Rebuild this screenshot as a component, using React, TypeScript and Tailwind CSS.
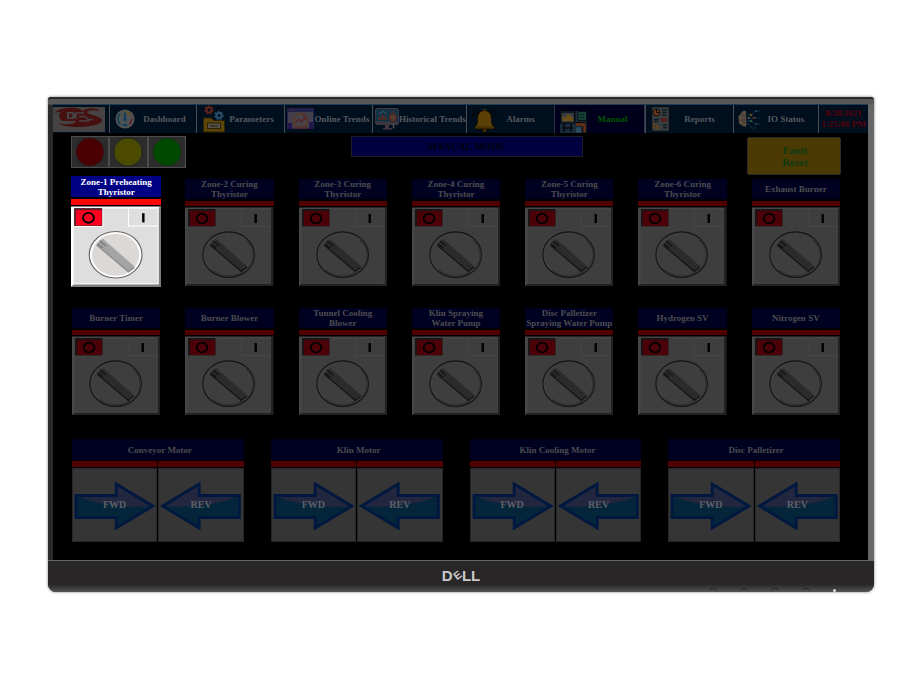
import React from "react";

function Logo() {
  return (
    <svg viewBox="0 0 52 25" className="w-full h-[25px]" preserveAspectRatio="none" aria-label="DBS logo" role="img">
      <rect width="52" height="25" fill="#454343" />
      <path d="M1 6C6 1 16 0 22 1c4 0 6 2 8 3 4-3 12-4 17 0-5-1-12-1-13 1 0 3 15 4 15 8 0 5-14 7-24 7-8 0-16-1-20-4 8 2 16 2 18-2H10c-4 0-5-9-2-9-3 0-5 0-7 1z" fill="#471010" />
      <path d="M14 5h5c5 0 5 7 0 7h-5z" fill="#454343" />
      <path d="M16 6.500h2c2 0 2 4 0 4h-2z" fill="#471010" />
      <path d="M23 12V6h8M26 9.500h6l3 3h5M26 14h10" fill="none" stroke="#454343" strokeWidth="1.400" />
    </svg>
  );
}

function GaugeIcon() {
  return (
    <svg viewBox="0 0 20 20" className="w-5 h-5 shrink-0">
      <circle cx="10" cy="10" r="9.6" fill="#4f5152" />
      <circle cx="10" cy="10" r="7" fill="none" stroke="#114052" strokeWidth="1.6" strokeDasharray="12 34" transform="rotate(130 10 10)" />
      <path d="M10 3a7 7 0 0 1 6 4" fill="none" stroke="#66501a" strokeWidth="1.6" />
      <path d="M17 10a7 7 0 0 1-3 5" fill="none" stroke="#5e1824" strokeWidth="1.6" />
      <path d="M9.3 3h1.4l.6 7H8.7z" fill="#10405b" />
      <circle cx="10" cy="10.5" r="1.8" fill="#10405b" />
      <rect x="7.5" y="15" width="5" height="2" fill="#10405b" />
    </svg>
  );
}

function FolderGearsIcon() {
  return (
    <svg viewBox="0 0 22 28" className="w-[22px] h-7 shrink-0">
      <circle cx="6" cy="5" r="2.6" fill="none" stroke="#5b2119" strokeWidth="2.2" />
      <circle cx="6" cy="5" r="4" fill="none" stroke="#5b2119" strokeWidth="1.4" strokeDasharray="1.8 1.7" />
      <circle cx="16" cy="10.500" r="2.6" fill="none" stroke="#27506a" strokeWidth="2" />
      <circle cx="16" cy="10.500" r="4" fill="none" stroke="#27506a" strokeWidth="1.4" strokeDasharray="1.8 1.6" />
      <path d="M13 2h3v2h-3" fill="none" stroke="#05080c" />
      <path d="M.5 13h8l2 2.500h11V27H.5z" fill="#5c4708" stroke="#2b2104" />
      <rect x="4.500" y="18" width="13" height="5.500" fill="#55504a" stroke="#2b2104" />
      <path d="M7 21h8" stroke="#2b2104" />
    </svg>
  );
}

function OnlineTrendIcon() {
  return (
    <svg viewBox="0 0 27 22" className="w-[27px] h-[22px] shrink-0">
      <rect x=".5" y=".5" width="26" height="20" fill="#443f4c" stroke="#232049" />
      <rect x=".5" y=".5" width="26" height="3.500" fill="#232049" />
      <path d="M3 2.200h1M5.500 2.200h1" stroke="#6a3038" />
      <path d="M1 15h4v6H1zM22 14h4v7h-4z" fill="#23184d" />
      <circle cx="13.500" cy="12.500" r="7" fill="#484548" stroke="#57382c" strokeWidth="1.800" />
      <path d="M8.500 15l3.500-4 2.500 3 4-5M15.500 9h3v3" fill="none" stroke="#55282e" strokeWidth="1.500" />
      <path d="M6 20h15" stroke="#55282e" strokeWidth="1.500" />
    </svg>
  );
}

function HistoryIcon() {
  return (
    <svg viewBox="0 0 24 22" className="w-6 h-[22px] shrink-0">
      <rect x=".5" y=".5" width="23" height="16" rx="1.500" fill="#123346" stroke="#423340" />
      <rect x="1" y="13.500" width="22" height="3" fill="#3c3640" />
      <path d="M4.500 12V9M7.500 12V7M10.500 12V8" stroke="#652719" strokeWidth="1.800" />
      <path d="M4 6l4-2.500L12 6" fill="none" stroke="#47505a" />
      <circle cx="18" cy="9.500" r="3" fill="#49413b" stroke="#652719" strokeWidth="1.600" />
      <path d="M15 4h5" stroke="#652719" />
      <path d="M10 17h4v3h3v1.500H8V20h2z" fill="#443340" />
      <path d="M18.500 15.500v5" stroke="#554c52" strokeWidth="1.500" />
    </svg>
  );
}

function BellIcon() {
  return (
    <svg viewBox="0 0 25 27" className="w-[25px] h-[27px] shrink-0">
      <path d="M5 2C2 4 .8 7 .8 11M7 5C5 6.500 4 8.500 4 11M20 2c3 2 4.200 5 4.200 9M18 5c2 1.500 3 3.500 3 6" fill="none" stroke="#05080a" strokeWidth="1.500" />
      <circle cx="12.500" cy="24" r="2.500" fill="#4c3203" stroke="#080603" />
      <circle cx="12.500" cy="4.500" r="1.700" fill="#5c4006" />
      <path d="M12.500 4.500c-5 0-7 4-7 8 0 5-1 7-3 9v1.500h20V21.500c-2-2-3-4-3-9 0-4-2-8-7-8z" fill="#5a3f06" stroke="#0f0b04" strokeWidth="1" />
      <path d="M3 21h19" stroke="#3f2b03" />
    </svg>
  );
}

function ManualIcon() {
  return (
    <svg viewBox="0 0 27 27" className="w-[27px] h-[27px] shrink-0">
      <path d="M4 0v6M8 1v4" stroke="#060708" strokeWidth="1.500" />
      <rect x="0" y="5" width="27" height="22" fill="#1a2c3c" />
      <rect x=".7" y="6" width="14" height="11" fill="#343e42" stroke="#08090d" strokeWidth="1.400" />
      <path d="M2.500 15V9.500L5 12l3-4 5 4v3z" fill="#6c4d15" />
      <path d="M4 18v8M11 18v8M2 22h11" stroke="#06090d" strokeWidth="1.500" />
      <rect x="18" y="5.500" width="8.500" height="9" fill="#164039" stroke="#07100f" />
      <path d="M20 8.500h4M20 11h4" stroke="#0a201d" />
      <path d="M16 18h8.500v9" fill="none" stroke="#06090d" strokeWidth="4" />
      <path d="M16 18.500h8.500v8" fill="none" stroke="#6a3414" strokeWidth="2.400" />
      <path d="M16 21.500h5v5h-5z" fill="#2c4c5e" />
    </svg>
  );
}

function ReportIcon() {
  return (
    <svg viewBox="0 0 19 26" className="w-[19px] h-[26px] shrink-0">
      <rect x=".7" y=".7" width="17.600" height="24.600" rx="1" fill="#343e43" stroke="#0b1014" strokeWidth="1.200" />
      <circle cx="5.500" cy="6.500" r="3.500" fill="#663718" stroke="#17100c" />
      <path d="M5.500 6.500V3M5.500 6.500H9" stroke="#17100c" />
      <path d="M11 4h5M11 6.500h5M11 9h4M3 13.500h5M3 15.500h4M12 19h4M12 21.500h4" stroke="#131d21" strokeWidth="1.300" />
      <rect x="10" y="12" width="6" height="4" fill="#5a191d" />
      <path d="M3 23v-6M6 23v-4M9 23v-2" stroke="#684315" strokeWidth="1.800" />
    </svg>
  );
}

function IoIcon() {
  return (
    <svg viewBox="0 0 26 22" className="w-[26px] h-[22px] shrink-0">
      <path d="M8 3C5 2 3 4 3 6 0 7 0 10 1 12c-1 3 1 5 3 5 1 2 3 2 4.500 1z" fill="#574b3f" />
      <path d="M4 7l3 1M3 12h4M5 15l2-1" stroke="#302820" strokeWidth=".8" />
      <path d="M9 7h5l3-4h5M9 10h13M9 13h5l2 3h6M9 16h2l3 4h4" fill="none" stroke="#17384f" strokeWidth="1" strokeDasharray="3 1" />
      <circle cx="13" cy="7" r="1.200" fill="#6a511d" />
      <circle cx="16" cy="10" r="1.300" fill="#652629" />
      <circle cx="13" cy="13" r="1.200" fill="#205b40" />
      <circle cx="18" cy="3" r="1" fill="#2f4654" />
      <circle cx="18" cy="16" r="1" fill="#2f4654" />
      <circle cx="11" cy="10" r="1.200" fill="#47505a" />
    </svg>
  );
}

const tabs = [
  { name: "Dashboard", icon: <GaugeIcon />, cell: "pl-[5px] pr-[2px]" },
  { name: "Parameters", icon: <FolderGearsIcon />, cell: "pl-[6px] pr-[6px]" },
  { name: "Online Trends", icon: <OnlineTrendIcon />, cell: "pl-[2px] pr-[2px]" },
  { name: "Historical Trends", icon: <HistoryIcon />, cell: "pl-[2px]" },
  { name: "Alarms", icon: <BellIcon />, cell: "pl-[5px] pr-[10px]" },
  { name: "Manual", icon: <ManualIcon />, cell: "pl-[5px] pr-[6px]", active: true },
  { name: "Reports", icon: <ReportIcon />, cell: "pl-[5px] pr-1" },
  { name: "IO Status", icon: <IoIcon />, cell: "pl-[4px] pr-[10px]" },
];

function NavBar() {
  return (
    <nav className="grid h-[29px] grid-cols-[56fr_87fr_88fr_88fr_94fr_88fr_91fr_88fr_85fr_50fr] border-t border-[#1c3d58] bg-[#000f1e]">
      <div className="flex items-center pr-1">
        <Logo />
      </div>
      {tabs.map((t) => (
        <button
          key={t.name}
          className={`flex min-w-0 items-center border-l text-[9px] leading-[10px] font-bold whitespace-nowrap ${t.cell} ${
            t.active
              ? "border-r border-[#2c3444] bg-[#00001c] text-[#005500]"
              : "border-[#4a4e54] text-[#56595e]"
          }`}
        >
          {t.icon}
          <span className="flex flex-1 justify-center">{t.name}</span>
        </button>
      ))}
      <div className="flex flex-col items-center justify-center border-l border-[#4a4e54] text-[9px] leading-[11px] font-bold whitespace-nowrap text-[#5a0008]">
        <span>8/28/2021</span>
        <span>1:25:06 PM</span>
      </div>
    </nav>
  );
}

function Lamp({ fill }: { fill: string }) {
  return (
    <div className="flex flex-1 items-center justify-center border border-[#4c4c4c] bg-[#2c2c2c]">
      <svg viewBox="0 0 30 30" className="h-[30px] w-[30px]">
        <circle cx="15" cy="15" r="14.200" fill={fill} stroke="#262626" />
      </svg>
    </div>
  );
}

function SwitchFace({ lit }: { lit?: boolean }) {
  const c = lit
    ? { panel: "#dedede", hi: "#ffffff", lo: "#7c7c7c", red: "#ff0020", redLo: "#5a2028", ring: "#666", rim: "#ffffff", dial: "#dcd8d6", bar: "#a4a4a4", barLo: "#8a8a8a", tick: "#777", ink: "#000" }
    : { panel: "#3e3e3e", hi: "#474747", lo: "#222222", red: "#4c0008", redLo: "#1c1416", ring: "#141414", rim: "#404040", dial: "#3e3e3e", bar: "#2b2b2b", barLo: "#131313", tick: "#131313", ink: "#000" };
  return (
    <svg viewBox="0 0 88 79" className="block h-auto w-full">
      <rect width="88" height="79" fill={c.lo} />
      <path d="M0 79V1h87l-3 2v73H3z" fill={c.hi} />
      <path d="M85 2.500L88 0v79H0l3-3h82z" fill={c.lo} />
      <rect x="2" y="2" width="83" height="74" fill={c.panel} stroke={c.hi} />
      <rect x="3" y="2" width="28" height="18" fill={c.redLo} />
      <path d="M31 2v18H3" fill="none" stroke={c.hi} />
      <rect x="5" y="4" width="25" height="15" fill={c.red} />
      <ellipse cx="17" cy="11.500" rx="5.300" ry="4.800" fill="none" stroke={c.ink} strokeWidth="1.800" />
      <path d="M56 2.500v17h29" fill="none" stroke={c.hi} />
      <path d="M70.500 7v9" stroke={c.ink} strokeWidth="2.400" />
      <ellipse cx="43.500" cy="47.500" rx="25.700" ry="22.700" fill={c.rim} stroke={c.ring} strokeWidth="1.100" />
      <ellipse cx="43.500" cy="47.500" rx="23" ry="20.500" fill={c.dial} />
      {!lit && (
        <path d="M61 33c9 8 9 20 2 28M27 63c9 7 22 8 31 1" fill="none" stroke="#2e2e2e" strokeWidth="1.300" />
      )}
      <path d="M25 37l6-5 31 27-6 6z" fill={c.bar} />
      <path d="M25 38l31 26 6-4" fill="none" stroke={c.barLo} strokeWidth="1.200" />
      <path d="M28 34l6 5M26 37l5 4" stroke={c.tick} strokeWidth="1.300" />
    </svg>
  );
}

function SwitchCard({ lines, lit }: { lines: string[]; lit?: boolean }) {
  return (
    <div className={lit ? "-mx-px" : "mt-[3px]"}>
      <div
        className={`flex flex-col items-center justify-center text-[9px] leading-[10px] font-bold whitespace-nowrap ${
          lit ? "h-[21px] bg-[#000084] text-white" : "h-5 bg-[#000020] text-[#4d4d50]"
        }`}
      >
        {lines.map((l) => (
          <span key={l}>{l}</span>
        ))}
      </div>
      <div className={`mt-[2px] ${lit ? "h-[6px] bg-[#f90808]" : "h-[5px] bg-[#500000]"}`} />
      <button aria-label={lines.join(" ")} aria-pressed="false" className="mt-px block w-full">
        <SwitchFace lit={lit} />
      </button>
    </div>
  );
}

function Arrow({ dir }: { dir: "FWD" | "REV" }) {
  const fwd = dir === "FWD";
  return (
    <button className="relative flex-1 border border-[#25252a] bg-[#353535]">
      <svg viewBox="0 0 84 72" className="block h-full w-full" preserveAspectRatio="none">
        <g transform={fwd ? undefined : "translate(84 0) scale(-1 1)"}>
          <path d="M3 26.500h40V15l37 22-37 22V48.500H3z" fill="#05263a" />
          <path d="M4 27h40V16l34 21.500c-20 1-50 0-74-10.500z" fill="#22263f" />
          <path d="M3 26.500h40.500V15l37 22-37 22V48.500H3z" fill="none" stroke="#00183f" strokeWidth="2.800" />
        </g>
      </svg>
      <span className="absolute inset-0 flex items-center justify-center text-[10px] leading-[12px] font-bold text-[#5b6268]">
        {dir}
      </span>
    </button>
  );
}

function MotorCard({ name }: { name: string }) {
  return (
    <section>
      <h2 className="flex h-[21px] items-center justify-center bg-[#000020] pl-1 text-[9px] leading-[10px] font-bold text-[#4d4d50]">
        {name}
      </h2>
      <div className="mt-px flex gap-px">
        <div className="h-[6px] flex-1 bg-[#500000]" />
        <div className="h-[6px] flex-1 bg-[#500000]" />
      </div>
      <div className="mt-px flex h-[74px] gap-px">
        <Arrow dir="FWD" />
        <Arrow dir="REV" />
      </div>
    </section>
  );
}

const zoneSwitches = [
  ["Zone-1 Preheating", "Thyristor"],
  ["Zone-2 Curing", "Thyristor"],
  ["Zone-3 Curing", "Thyristor"],
  ["Zone-4 Curing", "Thyristor"],
  ["Zone-5 Curing", "Thyristor"],
  ["Zone-6 Curing", "Thyristor"],
  ["Exhaust Burner"],
];

const plantSwitches = [
  ["Burner Timer"],
  ["Burner Blower"],
  ["Tunnel Cooling", "Blower"],
  ["Klin Spraying", "Water Pump"],
  ["Disc Palletizer", "Spraying Water Pump"],
  ["Hydrogen SV"],
  ["Nitrogen SV"],
];

const motors = ["Conveyor Motor", "Klin Motor", "Klin Cooling Motor", "Disc Palletizer"];

export default function App() {
  return (
    <main className="min-h-screen bg-white px-12 pt-[97px] font-['Liberation_Serif',serif]">
      <div className="rounded-t-[3px] rounded-b-[8px] bg-linear-to-r from-[#2a2a2a] to-[#666] shadow-[0_0_3px_#777]">
        <div className="rounded-t-[3px] border-t-2 border-[#2c2c2c] bg-linear-to-b from-[#585858] from-[5px] to-transparent to-[6px] pt-[5px] pr-[6px] pl-[5px]">
          <div className="bg-black pb-[18px]">
            <NavBar />
            <div className="flex items-start justify-between pt-[3px] pr-[27px] pl-[18px]">
              <div className="flex h-8 w-[115px]">
                <Lamp fill="#4a0000" />
                <Lamp fill="#4c4a00" />
                <Lamp fill="#004a00" />
              </div>
              <h1 className="flex h-[21px] w-[232px] items-center justify-center border border-[#1c1c2c] bg-[#000040] text-[10px] leading-[12px] font-bold text-[#00000c]">
                MANUAL MODE
              </h1>
              <button className="mt-px h-[38px] w-[94px] rounded-[2px] border border-[#2e2a2a] bg-[#4b3a03] pl-[2px] text-[11px] leading-[12px] font-bold text-[#0c3a14]">
                Fault
                <br />
                Reset
              </button>
            </div>
            <div className="mt-px grid grid-cols-7 items-start gap-x-[25px] pr-[28px] pl-[19px]">
              {zoneSwitches.map((s, i) => (
                <SwitchCard key={s[0]} lines={s} lit={i === 0} />
              ))}
            </div>
            <div className="mt-[18px] grid grid-cols-7 items-start gap-x-[25px] pr-[28px] pl-[19px]">
              {plantSwitches.map((s) => (
                <SwitchCard key={s[0]} lines={s} />
              ))}
            </div>
            <div className="mt-6 grid grid-cols-4 gap-x-[27px] pr-[28px] pl-[19px]">
              {motors.map((m) => (
                <MotorCard key={m} name={m} />
              ))}
            </div>
          </div>
        </div>
        <footer className="relative flex h-8 items-center justify-center rounded-b-[8px] border-t border-[#666] bg-linear-to-b from-[#282627] from-75% to-[#555] pb-[3px]">
          <div aria-label="Dell" className="flex items-center gap-px font-['Liberation_Sans',sans-serif] text-[15px] leading-none font-bold text-[#c9c9c9]">
            <span>D</span>
            <span className="-rotate-38 text-[11px] leading-none">E</span>
            <span>LL</span>
          </div>
          <div className="absolute right-[38px] bottom-0 flex items-end gap-[23px]">
            <i className="h-1 w-2 rounded-t-full border-t border-[#222]" />
            <i className="h-1 w-2 rounded-t-full border-t border-[#222]" />
            <i className="h-1 w-2 rounded-t-full border-t border-[#222]" />
            <i className="h-1 w-2 rounded-t-full border-t border-[#222]" />
            <i className="h-[3px] w-[3px] rounded-full bg-[#ddd]" />
          </div>
        </footer>
      </div>
    </main>
  );
}
